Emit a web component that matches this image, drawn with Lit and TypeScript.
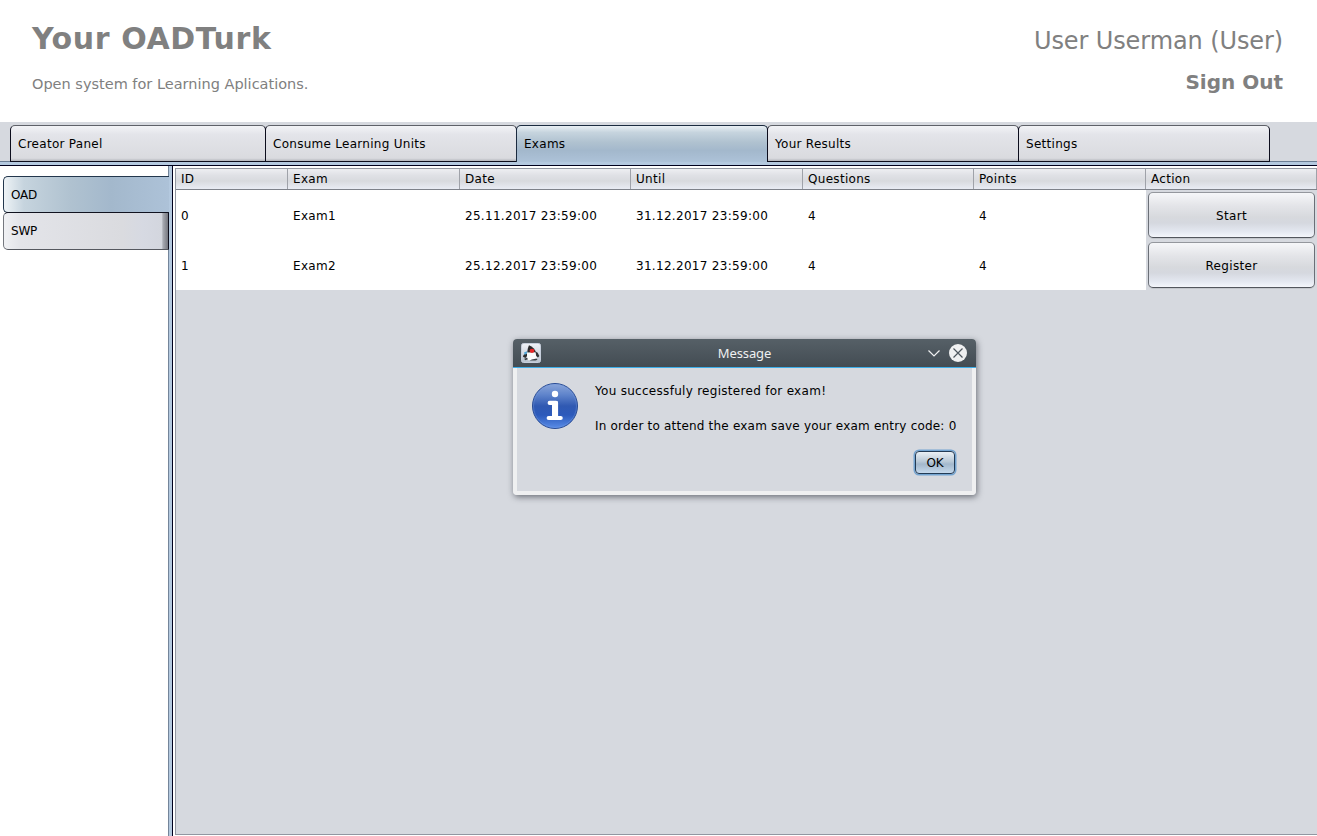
import { LitElement, html, css, svg } from "lit";
import { customElement, property } from "lit/decorators.js";

const dukeIcon = svg`
  <svg class="duke" width="20" height="20" viewBox="0 0 20 20">
    <defs><linearGradient id="dk" x1="0" y1="0" x2="0" y2="1">
      <stop offset="0" stop-color="#f0f2f7"/><stop offset="1" stop-color="#b9c3cf"/></linearGradient></defs>
    <rect x=".5" y=".5" width="19" height="19" rx="2" fill="url(#dk)" stroke="#c6cedb"/>
    <path d="M8 2.300C7 4.500 6.500 6.500 6.300 9.500l3.500 1.500 5.200-1.500C14.300 6.500 11.500 3.500 8 2.300z" fill="#2a2a2c"/>
    <path d="M6.300 9.500l8.200-.3c1.400 2.300 1.800 5 1 7.300-1.800.9-2.800-.3-4.200-.1-1.600.2-2.500 1.300-4.300.5C5.800 15 5.700 12 6.300 9.500z" fill="#fafafa"/>
    <path d="M6 10.500C4 10.500 2.300 11.500 1.900 13.700l2.600 1.300L6 13z" fill="#2c2d2f"/>
    <path d="M14.500 8.500l2.200 1.200 1.600 3.200-1.300 1.600-1.800-1.500z" fill="#2f3033"/>
    <path d="M3 9.500l3-1.200v2L3.800 12z" fill="#50a6d8"/>
    <path d="M6.800 16.200l-2.500 1.100-1.200-1.600 3-1zM15.500 15.500l1 1.300-2 .8h-6l2.500-1z" fill="#3c4044"/>
    <ellipse cx="11" cy="7.800" rx="2.400" ry="2.100" fill="#e82626"/>
  </svg>`;

const infoIcon = svg`
  <svg class="info" width="48" height="48" viewBox="0 0 48 48">
    <defs>
      <linearGradient id="ig" x1="0" y1="0" x2="0" y2="1">
        <stop offset="0" stop-color="#8ba6da"/><stop offset=".25" stop-color="#5f84cb"/>
        <stop offset=".5" stop-color="#3059b2"/><stop offset=".7" stop-color="#2c5abb"/><stop offset="1" stop-color="#5a8de8"/>
      </linearGradient>
    </defs>
    <circle cx="24" cy="24" r="22.500" fill="url(#ig)" stroke="#274a94"/>
    <circle cx="24" cy="24" r="21.500" fill="none" stroke="#7fa3e6" stroke-opacity=".35"/>
    <circle cx="24" cy="12" r="3.200" fill="#fff"/>
    <path d="M18.700 20.900H25V36M17.700 36H29.700" fill="none" stroke="#fff" stroke-width="4.200" stroke-linecap="round" stroke-linejoin="round"/>
    <path d="M21 19.500h6v16h-6z" fill="#fff"/>
  </svg>`;

@customElement("message-dialog")
class MessageDialog extends LitElement {
  static styles = css`
    :host { display: flex; flex-direction: column; box-sizing: border-box; width: 463px; height: 156px;
      border-radius: 4px; background: #eff0f1; overflow: hidden; color: #000; }
    .title { height: 28px; display: grid; grid-template-columns: 60px 1fr 60px; align-items: center;
      background: linear-gradient(#566067, #434c53); border-bottom: 1px solid #3daee9; color: #eff0f1;
      font: 13px "Noto Sans", sans-serif; letter-spacing: -.1px; text-align: center; flex: none; }
    .duke { display: block; margin-left: 8px; }
    .controls { display: block; }
    .body { flex: 1; margin: 0 4px 4px; background: #d6d9df; display: grid;
      grid-template-columns: 63px minmax(0, 1fr); padding: 14px 16px 16px 14px; }
    .info { display: block; }
    .copy { display: flex; flex-direction: column; white-space: nowrap; padding-left: 1px; }
    .line { height: 18px; line-height: 18px; margin-bottom: 17px; }
    .first { letter-spacing: .29px; }
    .second { letter-spacing: .2px; margin-bottom: 16px; }
    .ok { align-self: flex-end; box-sizing: border-box; width: 40px; height: 23px; margin: 0 1px 0 0; padding: 0;
      border: 1px solid #233b55; border-radius: 4px; box-shadow: 0 0 0 1.5px #73a4d1;
      background: linear-gradient(#eaf0f5, #b9c9d7 45%, #a3b8cc 58%, #c5d9ec); font: 12px "DejaVu Sans", sans-serif;
      letter-spacing: -.2px; color: #000; }
  `;
  render() {
    return html`
      <div class="title">${dukeIcon}<span>Message</span>
        <svg class="controls" width="60" height="28" viewBox="0 0 60 28">
          <path d="M12.500 11.500L18 17l5.500-5.500" fill="none" stroke="#eff0f1" stroke-width="1.200"/>
          <circle cx="42" cy="14" r="9" fill="#eff0f1"/>
          <path d="M37.500 9.500l9 9m0-9l-9 9" stroke="#4d565d" stroke-width="1.200"/>
        </svg>
      </div>
      <div class="body">${infoIcon}
        <div class="copy">
          <div class="line first">You successfuly registered for exam!</div>
          <div class="line second">In order to attend the exam save your exam entry code: 0</div>
          <button class="ok">OK</button>
        </div>
      </div>`;
  }
}

@customElement("exam-table")
class ExamTable extends LitElement {
  @property({ attribute: false }) rows: string[][] = [
    ["0", "Exam1", "25.11.2017 23:59:00", "31.12.2017 23:59:00", "4", "4", "Start"],
    ["1", "Exam2", "25.12.2017 23:59:00", "31.12.2017 23:59:00", "4", "4", "Register"],
  ];
  static styles = css`
    :host { display: block; box-sizing: border-box; border: 1px solid #9297a1; border-right: 0; background: #d6d9df; }
    .row { display: grid; grid-template-columns: 112px 172px 171px 172px 171px 172px 171px; }
    .head { height: 20px; border-bottom: 1px solid #7e828a;
      background: linear-gradient(#eeeff2, #e0e1e6 30%, #d8dade 60%, #e9ecf4); }
    .th { box-sizing: border-box; padding-left: 5px; line-height: 20px; letter-spacing: .3px;
      border-right: 1px solid #9fa2a9; }
    .rec { height: 50px; grid-template-rows: 50px; }
    .td { box-sizing: border-box; background: #fff; padding: 3px 0 0 5px; line-height: 46px; letter-spacing: .3px; white-space: nowrap; }
    .act { box-sizing: border-box; padding: 2px 2px 2px 2px; display: flex; }
    .btn { flex: 1; box-sizing: border-box; margin: 0 0 -1px; height: 46px; padding: 1px 0 0; border: 1px solid #6b6f77;
      border-top-color: #94979d; border-bottom-color: #52565d;
      border-radius: 5px; box-shadow: 0 1px 0 #c3c6cc; color: #000;
      background: linear-gradient(#f6f7f9, #e4e5e9 28%, #d7d9dd 55%, #d5d8df 68%, #e4e8f1 88%, #f4f6fb);
      font: 12px "DejaVu Sans", sans-serif; letter-spacing: .35px; }
  `;
  render() {
    return html`
      <div class="row head">
        ${["ID", "Exam", "Date", "Until", "Questions", "Points", "Action"].map((h) => html`<div class="th">${h}</div>`)}
      </div>
      ${this.rows.map((r) => html`<div class="row rec">
        ${r.slice(0, 6).map((c) => html`<div class="td">${c}</div>`)}
        <div class="act"><button class="btn">${r[6]}</button></div>
      </div>`)}`;
  }
}

@customElement("app-root")
class AppRoot extends LitElement {
  static styles = css`
    :host { display: flex; flex-direction: column; position: relative; width: 1317px; height: 836px; overflow: hidden;
      background: #fff; color: #000; font: 12px "DejaVu Sans", sans-serif; }
    .header { height: 122px; flex: none; box-sizing: border-box; display: flex; justify-content: space-between;
      padding: 19px 34px 0 32px; color: #808080; white-space: nowrap; }
    .brand { font-size: 30px; font-weight: bold; line-height: 40px; letter-spacing: .6px; }
    .sub { font-size: 14.5px; line-height: 20px; margin-top: 15px; }
    .account { text-align: right; }
    .user { font-size: 24px; line-height: 30px; margin-top: 7px; letter-spacing: -.1px; }
    .out { font-size: 20px; font-weight: bold; line-height: 24px; margin-top: 14px; }
    .tabs { height: 37px; flex: none; display: grid; grid-template-columns: 256px 251px 251px 251px 251px;
      padding: 3px 0 0 10px; background: #d6d9df; box-shadow: inset 0 -1px 0 #6d7f95; }
    .tab { box-sizing: border-box; border: 1px solid #0c0d1c; border-top-color: #5e6168; border-radius: 5px 5px 0 0;
      margin-left: -1px; padding: 1px 0 0 7px; line-height: 34px; letter-spacing: .28px;
      background: linear-gradient(#f2f3f6, #e3e4e9 25%, #dadbdf 92%, #b4b6bc); }
    .tab:first-child { margin-left: 0; }
    .tab.on { border-color: #1b2b3f; border-bottom: 0;
      background: linear-gradient(#e9eff4, #c6d4de 18%, #b0c2d0 45%, #a3b8cc 68%, #adc2d8); }
    .band { height: 3px; flex: none; background: #b4c9df; border-bottom: 1px solid #00001c; }
    .main { flex: 1; display: flex; min-height: 0; }
    .side { width: 168px; box-sizing: border-box; padding: 10px 0 0 3px; }
    .nav { box-sizing: border-box; height: 37px; line-height: 34px; padding: 1px 0 0 7px; border: 1px solid #23374d;
      border-radius: 5px 0 0 5px; letter-spacing: -.2px; }
    .nav.on { border-right: 0; margin-right: -1px; position: relative;
      background: linear-gradient(90deg, #eef3f6, #c6d4de 12%, #b0c2d0 40%, #a3b8cc 65%, #adc2d8); }
    .nav.off { height: 38px; margin-top: -1px; margin-right: -1px; position: relative; border-color: #10121f #0c0d1c #55585f #74777e;
      background: linear-gradient(90deg, #f0f1f4, #e3e4e9 10%, #dadbdf 72%, #d6d9e2 85%, #d3d6de 96%, #a6a9b1 97%, #75777f); }
    .rail { width: 3px; border-left: 1px solid #74859a; border-right: 1px solid #00001c; background: #b4c9df; }
    .content { flex: 1; padding: 2px 0 1px 2px; display: flex; }
    exam-table { flex: 1; }
    .modal { position: absolute; left: 513px; top: 339px; border-radius: 4px; box-shadow: 1px 2px 6px rgba(20, 25, 35, .55); }
  `;
  render() {
    const tabs = ["Creator Panel", "Consume Learning Units", "Exams", "Your Results", "Settings"];
    return html`
      <div class="header">
        <div><div class="brand">Your OADTurk</div><div class="sub">Open system for Learning Aplications.</div></div>
        <div class="account"><div class="user">User Userman (User)</div><div class="out">Sign Out</div></div>
      </div>
      <div class="tabs">${tabs.map((t, i) => html`<div class="tab ${i === 2 ? "on" : ""}">${t}</div>`)}</div>
      <div class="band"></div>
      <div class="main">
        <div class="side"><div class="nav on">OAD</div><div class="nav off">SWP</div></div>
        <div class="rail"></div>
        <div class="content"><exam-table></exam-table></div>
      </div>
      <div class="modal"><message-dialog></message-dialog></div>`;
  }
}
